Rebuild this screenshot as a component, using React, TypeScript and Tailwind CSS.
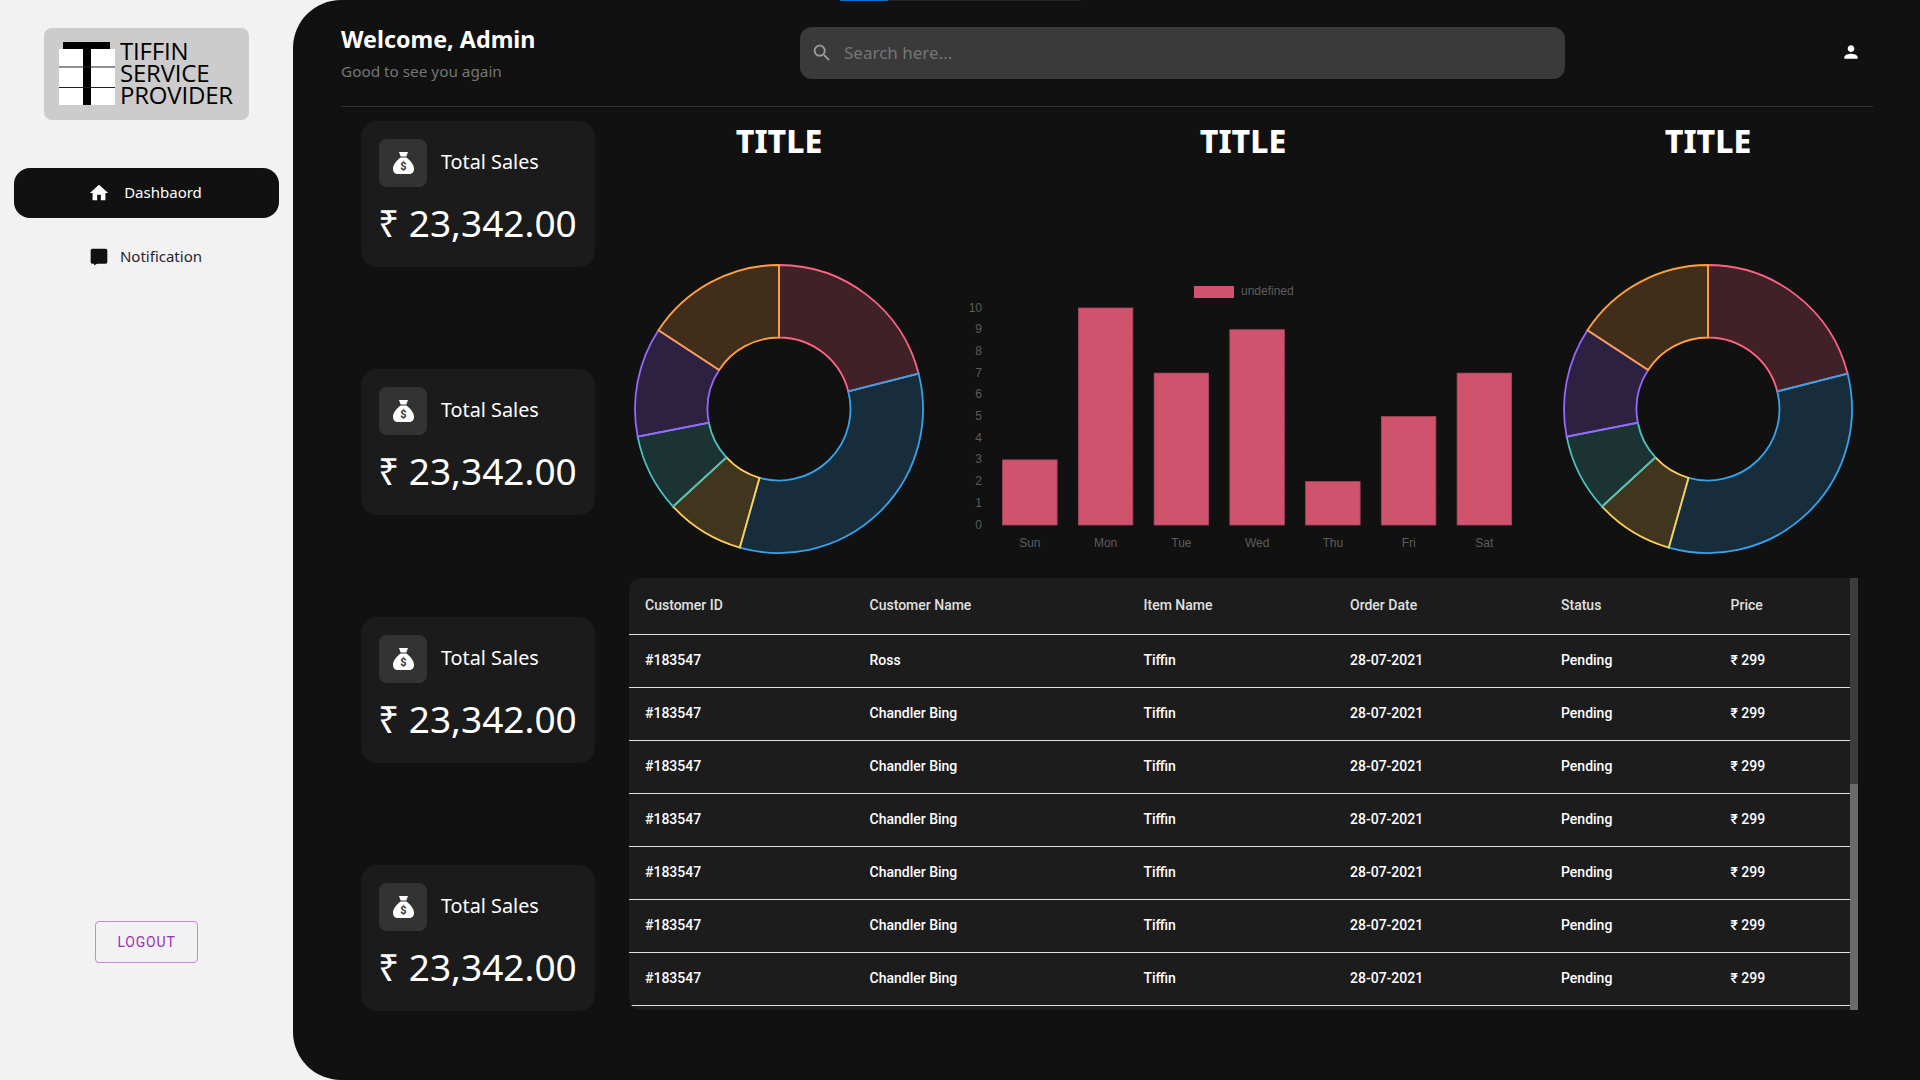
import React from 'react';

const uiFont = 'font-["Noto_Sans",sans-serif]';

const rows = ['Ross', 'Chandler Bing', 'Chandler Bing', 'Chandler Bing', 'Chandler Bing', 'Chandler Bing', 'Chandler Bing'];

const segments = [
  { value: 12, fill: 'rgba(255,99,132,0.2)', stroke: 'rgb(255,99,132)' },
  { value: 19, fill: 'rgba(54,162,235,0.2)', stroke: 'rgb(54,162,235)' },
  { value: 5, fill: 'rgba(255,206,86,0.2)', stroke: 'rgb(255,206,86)' },
  { value: 5, fill: 'rgba(75,192,192,0.2)', stroke: 'rgb(75,192,192)' },
  { value: 7, fill: 'rgba(153,102,255,0.2)', stroke: 'rgb(153,102,255)' },
  { value: 9, fill: 'rgba(255,159,64,0.2)', stroke: 'rgb(255,159,64)' },
];

const bars = [
  { day: 'Sun', value: 3 },
  { day: 'Mon', value: 10 },
  { day: 'Tue', value: 7 },
  { day: 'Wed', value: 9 },
  { day: 'Thu', value: 2 },
  { day: 'Fri', value: 5 },
  { day: 'Sat', value: 7 },
];

const Doughnut = () => {
  const cx = 145;
  const cy = 145;
  const outer = 144;
  const inner = 71.5;
  const total = segments.reduce((sum, s) => sum + s.value, 0);
  let start = 0;

  const point = (r: number, a: number) => `${cx + r * Math.sin(a)} ${cy - r * Math.cos(a)}`;

  return (
    <svg width="290" height="290" viewBox="0 0 290 290">
      {segments.map((s) => {
        const end = start + (s.value / total) * Math.PI * 2;
        const large = end - start > Math.PI ? 1 : 0;
        const d = `M${point(outer, start)} A${outer} ${outer} 0 ${large} 1 ${point(outer, end)} L${point(inner, end)} A${inner} ${inner} 0 ${large} 0 ${point(inner, start)} Z`;
        start = end;
        return <path key={s.stroke} d={d} fill={s.fill} stroke={s.stroke} strokeWidth="1.8" />;
      })}
    </svg>
  );
};

const BarChart = () => {
  const left = 29;
  const step = 75.75;
  const bottom = 261;
  const unit = 21.7;
  const tickFont = '"Liberation Sans", Arial, sans-serif';

  return (
    <svg width="560" height="290" viewBox="0 0 560 290">
      {Array.from({ length: 11 }).map((_, i) => (
        <g key={i}>
          <line x1={left - 8} x2={left + step * 7} y1={bottom - i * unit} y2={bottom - i * unit} stroke="rgba(0,0,0,0.08)" />
          <text x={left - 10} y={bottom - i * unit + 3.5} textAnchor="end" fontSize="12" fontFamily={tickFont} fill="#5c5c5c">
            {i}
          </text>
        </g>
      ))}
      {Array.from({ length: 8 }).map((_, i) => (
        <line key={i} x1={left + i * step} x2={left + i * step} y1={bottom - 217} y2={bottom + 8} stroke="rgba(0,0,0,0.08)" />
      ))}
      {bars.map((b, i) => (
        <g key={b.day}>
          <rect
            x={left + i * step + 10.6}
            y={bottom - b.value * unit}
            width="54.5"
            height={b.value * unit}
            fill="rgb(207,83,109)"
            stroke="#a5475d"
            strokeWidth="0.8"
          />
          <text x={left + i * step + step / 2} y={283} textAnchor="middle" fontSize="12" fontFamily={tickFont} fill="#5c5c5c">
            {b.day}
          </text>
        </g>
      ))}
      <rect x="231" y="22" width="40" height="12" fill="rgb(207,83,109)" />
      <text x="278" y="31" fontSize="12" fontFamily={tickFont} fill="#5c5c5c">
        undefined
      </text>
    </svg>
  );
};

const BagIcon = () => (
  <svg width="21" height="22" viewBox="0 0 21 22">
    <path d="M6 0h9l-1.7 4.6H7.7z" fill="#fff" />
    <path d="M7.6 5.6h5.8C16.8 8 21 12.6 21 17c0 3-2 5-5 5H5c-3 0-5-2-5-5 0-4.4 4.2-9 7.6-11.400z" fill="#fff" />
    <text x="10.500" y="18" textAnchor="middle" fontSize="11" fontWeight="700" fontFamily="Roboto, sans-serif" fill="#333">
      $
    </text>
  </svg>
);

const SalesCard = () => (
  <div className="h-[146px] w-[234px] rounded-2xl bg-[#1b1b1b] p-[18px]">
    <div className="flex items-center gap-[14px]">
      <div className="flex h-[48px] w-[48px] items-center justify-center rounded-lg bg-[#333333]">
        <BagIcon />
      </div>
      <span className="-mt-[2px] text-[19.800px] text-white">Total Sales</span>
    </div>
    <p className="mt-[12px] -ml-[1px] whitespace-nowrap text-[37px] leading-[48px] text-white">₹ 23,342.00</p>
  </div>
);

const Title = () => <h2 className="pt-[14px] text-[32px] leading-[40px] font-extrabold text-white">TITLE</h2>;

const App = () => {
  return (
    <div className={`flex h-screen w-screen overflow-hidden bg-[#f2f2f2] ${uiFont}`}>
      <aside className="flex w-[293px] shrink-0 flex-col items-center pt-[28px] pb-[117px]">
        <div className="flex h-[92px] w-[205px] items-center rounded-lg bg-[#cccccc] pl-[15px] text-black">
          <svg width="56" height="64" viewBox="0 0 56 64" className="shrink-0">
            <rect x="0" y="7" width="56" height="56" fill="#fff" />
            <rect x="4" y="0" width="47" height="7" fill="#000" />
            <rect x="24" y="7" width="8" height="56" fill="#000" />
            <rect x="0" y="24.500" width="56" height="1" fill="#222" />
            <rect x="0" y="45" width="56" height="1" fill="#222" />
          </svg>
          <div className='ml-[5px] -mt-[2px] font-["Open_Sans",sans-serif] text-[24px] leading-[22px] tracking-[-0.2px]'>
            <div>TIFFIN</div>
            <div>SERVICE</div>
            <div>PROVIDER</div>
          </div>
        </div>

        <a className="mt-[48px] flex h-[50px] w-[265px] items-center justify-center gap-[14px] rounded-2xl bg-[#111111] pr-[3px] pb-px text-[15px] text-white">
          <svg width="22" height="22" viewBox="0 0 24 24" fill="#fff">
            <path d="M10 20v-6h4v6h5v-8h3L12 3 2 12h3v8z" />
          </svg>
          Dashbaord
        </a>
        <a className="mt-[14px] flex h-[50px] w-[265px] items-center justify-center gap-[11px] pr-[2px] pb-px text-[15px] text-[#1f1f33]">
          <svg width="20" height="20" viewBox="0 0 24 24" fill="#111">
            <path d="M20 2H4c-1.100 0-2 .9-2 2v14c0 1.100.9 2 2 2h2v2l4-2h10c1.100 0 2-.9 2-2V4c0-1.100-.9-2-2-2z" />
          </svg>
          Notification
        </a>

        <button className='mt-auto h-[42px] w-[103px] rounded border border-[#cf84dc] font-["Roboto",sans-serif] text-[14px] font-normal tracking-[0.8px] text-[#a32cb8]'>
          LOGOUT
        </button>
      </aside>

      <main className="relative flex flex-1 flex-col rounded-l-[48px] bg-[#111111] pr-[47px] pl-[48px]">
        <div className="absolute top-0 left-[547px] flex h-px w-[241px]">
          <div className="w-[48px] bg-[#0070e0]" />
          <div className="flex-1 bg-[#222222]" />
        </div>

        <header className="flex h-[107px] shrink-0 items-center border-b border-[#333333]">
          <div className="w-[459px] shrink-0 self-start pt-[23px]">
            <h1 className="text-[23.300px] leading-[32px] font-bold text-white">Welcome, Admin</h1>
            <p className="mt-[4px] text-[15.300px] leading-[24px] text-[#757575]">Good to see you again</p>
          </div>
          <label className="flex h-[52px] w-[765px] shrink-0 items-center gap-[11px] rounded-xl bg-[#3a3a3a] pl-[11px]">
            <svg width="22" height="22" viewBox="0 0 24 24" fill="#9a9a9a" className="shrink-0">
              <path d="M15.5 14h-.79l-.28-.27C15.41 12.59 16 11.11 16 9.500 16 5.910 13.090 3 9.500 3S3 5.910 3 9.500 5.910 16 9.500 16c1.610 0 3.090-.59 4.230-1.570l.27.28v.79l5 4.990L20.490 19l-4.990-5zm-6 0C7.010 14 5 11.990 5 9.500S7.010 5 9.500 5 14 7.010 14 9.500 11.990 14 9.500 14z" />
            </svg>
            <input
              placeholder="Search here..."
              className="w-full bg-transparent text-[17px] text-white outline-none placeholder:text-[#757575]"
            />
          </label>
          <div className="flex flex-1 justify-end pr-[12px]">
            <svg width="20" height="20" viewBox="0 0 24 24" fill="#fff" className="-mt-[2px]">
              <path d="M12 12c2.210 0 4-1.790 4-4s-1.790-4-4-4-4 1.790-4 4 1.790 4 4 4zm0 2c-2.670 0-8 1.340-8 4v2h16v-2c0-2.660-5.330-4-8-4z" />
            </svg>
          </div>
        </header>

        <div className="flex flex-1 -mr-[32px]">
          <div className="ml-[20px] flex shrink-0 flex-col gap-[102px] pt-[14px]">
            <SalesCard />
            <SalesCard />
            <SalesCard />
            <SalesCard />
          </div>

          <div className="ml-[34px] w-[1229px] shrink-0">
            <div className="flex h-[471px] gap-[34px]">
              <div className="flex w-[300px] flex-col items-center">
                <Title />
                <div className="mt-[103px]">
                  <Doughnut />
                </div>
              </div>
              <div className="flex w-[560px] flex-col items-center">
                <Title />
                <div className="mt-[103px]">
                  <BarChart />
                </div>
              </div>
              <div className="ml-px flex w-[300px] flex-col items-center">
                <Title />
                <div className="mt-[103px]">
                  <Doughnut />
                </div>
              </div>
            </div>

            <div className='flex h-[432px] font-["Roboto",sans-serif]'>
              <div className="w-[1221px] overflow-hidden rounded-l-xl bg-[#1c1c1c]">
                <table className="w-full table-fixed border-collapse text-left text-[14px] font-medium">
                  <colgroup>
                    <col className="w-[224.500px]" />
                    <col className="w-[274px]" />
                    <col className="w-[206.500px]" />
                    <col className="w-[211px]" />
                    <col className="w-[169.500px]" />
                    <col />
                  </colgroup>
                  <thead>
                    <tr className="h-[56px] border-b border-[#e0e0e0] text-[#e0e0e0]">
                      <th className="pl-4 font-medium">Customer ID</th>
                      <th className="pl-4 font-medium">Customer Name</th>
                      <th className="pl-4 font-medium">Item Name</th>
                      <th className="pl-4 font-medium">Order Date</th>
                      <th className="pl-4 font-medium">Status</th>
                      <th className="pl-4 font-medium">Price</th>
                    </tr>
                  </thead>
                  <tbody className="text-white">
                    {rows.map((name, i) => (
                      <tr key={i} className="h-[53px] border-b border-[#e0e0e0]">
                        <td className="pl-4">#183547</td>
                        <td className="pl-4">{name}</td>
                        <td className="pl-4">Tiffin</td>
                        <td className="pl-4">28-07-2021</td>
                        <td className="pl-4">Pending</td>
                        <td className="pl-4">₹ 299</td>
                      </tr>
                    ))}
                  </tbody>
                </table>
              </div>
              <div className="flex w-[8px] flex-col justify-end bg-[#3d3d3d]">
                <div className="h-[226px] bg-[#6b6b6b]" />
              </div>
            </div>
          </div>
        </div>
      </main>
    </div>
  );
};

export default App;
